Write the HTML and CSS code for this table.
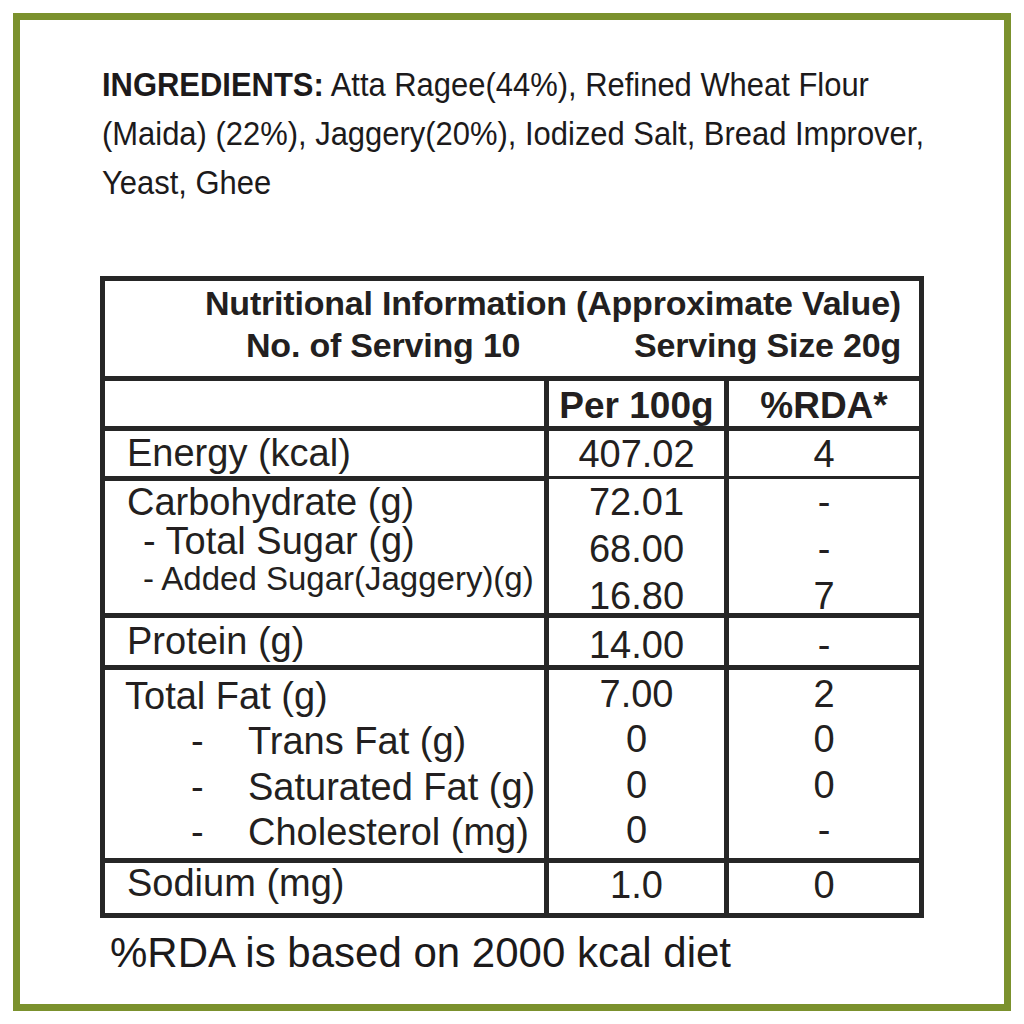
FILE: index.html
```html
<!DOCTYPE html>
<html lang="en">
<head>
<meta charset="utf-8">
<title>Nutritional Information</title>
<link rel="stylesheet" href="styles.css">
</head>
<body>
<div class="frame">
  <p class="ingredients"><b>INGREDIENTS:</b> Atta Ragee(44%), Refined Wheat Flour<br>(Maida) (22%), Jaggery(20%), Iodized Salt, Bread Improver,<br>Yeast, Ghee</p>

  <div class="nutri">
    <div class="cell title">
      <div class="t1">Nutritional Information (Approximate Value)</div>
      <div class="t2"><span>No. of Serving 10</span><span>Serving Size 20g</span></div>
    </div>

    <div class="cell"></div>
    <div class="cell head">Per 100g</div>
    <div class="cell head">%RDA*</div>

    <div class="cell label energy">Energy (kcal)</div>
    <div class="cell val energy-v">407.02</div>
    <div class="cell val energy-v">4</div>

    <div class="cell label carb">
      <div>Carbohydrate (g)</div>
      <div class="sub">- Total Sugar (g)</div>
      <div class="sub small">- Added Sugar(Jaggery)(g)</div>
    </div>
    <div class="cell val carb-v">
      <div>72.01</div>
      <div>68.00</div>
      <div>16.80</div>
    </div>
    <div class="cell val carb-v">
      <div>-</div>
      <div>-</div>
      <div>7</div>
    </div>

    <div class="cell label protein">Protein (g)</div>
    <div class="cell val protein-v">14.00</div>
    <div class="cell val protein-v">-</div>

    <div class="cell label fat">
      <div>Total Fat (g)</div>
      <div class="fsub"><span class="dash">-</span>Trans Fat (g)</div>
      <div class="fsub"><span class="dash">-</span>Saturated Fat (g)</div>
      <div class="fsub"><span class="dash">-</span>Cholesterol (mg)</div>
    </div>
    <div class="cell val fat-v">
      <div>7.00</div>
      <div>0</div>
      <div>0</div>
      <div>0</div>
    </div>
    <div class="cell val fat-v">
      <div>2</div>
      <div>0</div>
      <div>0</div>
      <div>-</div>
    </div>

    <div class="cell label sodium">Sodium (mg)</div>
    <div class="cell val sodium-v">1.0</div>
    <div class="cell val sodium-v">0</div>
  </div>

  <p class="note">%RDA is based on 2000 kcal diet</p>
</div>
</body>
</html>
```

FILE: styles.css
```css
html, body {
  margin: 0;
  padding: 0;
  background: #ffffff;
}

body {
  font-family: "Liberation Sans", Arial, sans-serif;
  color: #231f20;
}

.frame {
  box-sizing: border-box;
  width: 998px;
  height: 998px;
  margin: 13px;
  border: 7px solid #7b912d;
  background: #ffffff;
  overflow: hidden;
}

.ingredients {
  margin: 40px 0 0 82px;
  font-family: "Liberation Sans", Arial, sans-serif;
  font-size: 34px;
  line-height: 49px;
  white-space: nowrap;
  transform: scaleX(0.91);
  transform-origin: left top;
  color: #1c1a1b;
}

.ingredients b {
  font-weight: 700;
}

.nutri {
  box-sizing: border-box;
  width: 824px;
  margin: 69px 0 0 80px;
  border: 5px solid #262626;
  background: #262626;
  display: grid;
  grid-template-columns: 439px 175px 190px;
  grid-template-rows: 95px 45px 45px 132px 47px 188px 50px;
  gap: 5px;
}

.cell {
  background: #ffffff;
  font-size: 38px;
  line-height: 44px;
}

.title {
  grid-column: 1 / 4;
  padding: 1px 18px 0 0;
  font-weight: 700;
  font-size: 34px;
  line-height: 42px;
  letter-spacing: -0.2px;
}

.t1 {
  text-align: right;
}

.t2 {
  display: flex;
  justify-content: space-between;
  padding-left: 141px;
}

.head {
  font-weight: 700;
  font-size: 37px;
  text-align: center;
  padding-top: 3px;
}

.label {
  padding-left: 22px;
}

.val {
  text-align: center;
}

.energy { padding-top: 0; }
.energy-v { padding-top: 1px; }

.carb {
  padding-top: 2px;
  line-height: 38.5px;
}

.carb .sub {
  padding-left: 16px;
}

.carb .small {
  font-size: 33px;
}

.carb-v {
  line-height: 47px;
  margin-top: -2px;
}

.protein { padding-top: 1px; }
.protein-v { padding-top: 5px; }

.fat {
  padding-top: 4px;
  padding-left: 20px;
  line-height: 45.3px;
}

.fsub {
  padding-left: 66px;
}

.dash {
  display: inline-block;
  width: 57px;
}

.fat-v {
  padding-top: 2px;
  line-height: 45.3px;
}

.sodium {
  line-height: 40px;
}

.note {
  margin: 10px 0 0 90px;
  font-size: 42px;
  line-height: 50px;
  color: #1c1a1b;
}
```
